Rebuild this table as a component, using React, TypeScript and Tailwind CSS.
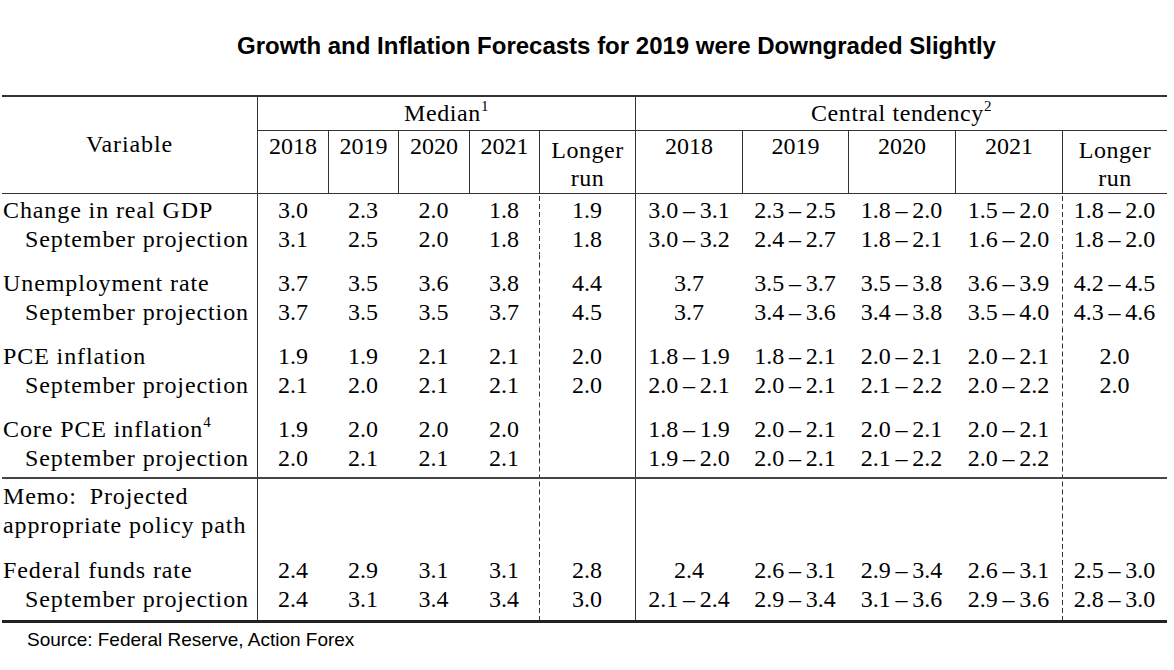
import React from "react";

const GRID =
  "grid grid-cols-[255px_71px_70px_71px_70px_96px_107px_106px_107px_107px_105px]";
const SOLID = "border-l border-[#333]";
const DASHED =
  "bg-[linear-gradient(to_bottom,#333_5px,transparent_5px)] bg-[length:1px_8px] bg-repeat-y bg-left";

type Row = { label: React.ReactNode; indent?: boolean; med: string[]; ct: string[] };

const fmt = (v: string) => (v.includes("-") ? v.replace("-", "\u2009\u2013\u2009") : v);

function Group({ rows, pad, className = "" }: { rows: Row[]; pad: string; className?: string }) {
  const cellLine = "h-[29px] leading-[29px] whitespace-nowrap";
  const border = (c: number) => (c === 0 ? SOLID : c === 4 ? DASHED : "");
  return (
    <div className={`${GRID} ${className}`}>
      <div className={`tracking-[0.9px] ${pad}`}>
        {rows.map((r, i) => (
          <div key={i} className={`${cellLine} ${r.indent ? "pl-[23px]" : "pl-[1px]"}`}>
            {r.label}
          </div>
        ))}
      </div>
      {[0, 1, 2, 3, 4].map((c) => (
        <div key={"m" + c} className={`text-center ${pad} ${border(c)}`}>
          {rows.map((r, i) => (
            <div key={i} className={cellLine}>
              {fmt(r.med[c])}
            </div>
          ))}
        </div>
      ))}
      {[0, 1, 2, 3, 4].map((c) => (
        <div key={"c" + c} className={`text-center ${pad} ${border(c)}`}>
          {rows.map((r, i) => (
            <div key={i} className={cellLine}>
              {fmt(r.ct[c])}
            </div>
          ))}
        </div>
      ))}
    </div>
  );
}

const SEPT = "September projection";
const EMPTY = ["", "", "", "", ""];

export default function App() {
  return (
    <div className="w-[1174px] h-[670px] bg-white text-black overflow-hidden">
      <div className="pt-[32px] pl-[59px] text-center font-['Liberation_Sans',Arial,sans-serif] font-bold text-[24px] leading-[28px]">
        Growth and Inflation Forecasts for 2019 were Downgraded Slightly
      </div>
      <div className="mt-[35px] ml-[2px] w-[1165px] border-t-2 border-[#333] font-['Liberation_Serif',serif] text-[24px]">
        {/* header */}
        <div className={`${GRID} grid-rows-[34px_62px] border-b border-[#333]`}>
          <div className="row-span-2 pt-[33px] text-center leading-[29px] tracking-[0.9px]">
            Variable
          </div>
          <div className={`col-span-5 ${SOLID} border-b pt-[2px] text-center leading-[29px] tracking-[0.6px]`}>
            Median<sup className="text-[15px] -top-[0.7em]">1</sup>
          </div>
          <div className={`col-span-5 ${SOLID} border-b pt-[2px] text-center leading-[29px] tracking-[0.6px]`}>
            Central tendency<sup className="text-[15px] -top-[0.7em]">2</sup>
          </div>
          {["2018", "2019", "2020", "2021"].map((y) => (
            <div key={"m" + y} className={`${SOLID} pt-[1px] text-center leading-[29px]`}>
              {y}
            </div>
          ))}
          <div className={`${SOLID} pt-[5px] text-center leading-[28px] tracking-[0.5px]`}>
            <div>Longer</div>
            <div>run</div>
          </div>
          {["2018", "2019", "2020", "2021"].map((y) => (
            <div key={"c" + y} className={`${SOLID} pt-[1px] text-center leading-[29px]`}>
              {y}
            </div>
          ))}
          <div className={`${SOLID} pt-[5px] text-center leading-[28px] tracking-[0.5px]`}>
            <div>Longer</div>
            <div>run</div>
          </div>
        </div>

        <Group
          pad="pt-[2px]"
          rows={[
            {
              label: "Change in real GDP",
              med: ["3.0", "2.3", "2.0", "1.8", "1.9"],
              ct: ["3.0-3.1", "2.3-2.5", "1.8-2.0", "1.5-2.0", "1.8-2.0"],
            },
            {
              label: SEPT,
              indent: true,
              med: ["3.1", "2.5", "2.0", "1.8", "1.8"],
              ct: ["3.0-3.2", "2.4-2.7", "1.8-2.1", "1.6-2.0", "1.8-2.0"],
            },
          ]}
        />
        <Group
          pad="pt-[15px]"
          rows={[
            {
              label: "Unemployment rate",
              med: ["3.7", "3.5", "3.6", "3.8", "4.4"],
              ct: ["3.7", "3.5-3.7", "3.5-3.8", "3.6-3.9", "4.2-4.5"],
            },
            {
              label: SEPT,
              indent: true,
              med: ["3.7", "3.5", "3.5", "3.7", "4.5"],
              ct: ["3.7", "3.4-3.6", "3.4-3.8", "3.5-4.0", "4.3-4.6"],
            },
          ]}
        />
        <Group
          pad="pt-[15px]"
          rows={[
            {
              label: "PCE inflation",
              med: ["1.9", "1.9", "2.1", "2.1", "2.0"],
              ct: ["1.8-1.9", "1.8-2.1", "2.0-2.1", "2.0-2.1", "2.0"],
            },
            {
              label: SEPT,
              indent: true,
              med: ["2.1", "2.0", "2.1", "2.1", "2.0"],
              ct: ["2.0-2.1", "2.0-2.1", "2.1-2.2", "2.0-2.2", "2.0"],
            },
          ]}
        />
        <Group
          pad="pt-[15px] pb-[4px]"
          className="border-b-2 border-[#444]"
          rows={[
            {
              label: (
                <>
                  Core PCE inflation<sup className="text-[15px] -top-[0.7em]">4</sup>
                </>
              ),
              med: ["1.9", "2.0", "2.0", "2.0", ""],
              ct: ["1.8-1.9", "2.0-2.1", "2.0-2.1", "2.0-2.1", ""],
            },
            {
              label: SEPT,
              indent: true,
              med: ["2.0", "2.1", "2.1", "2.1", ""],
              ct: ["1.9-2.0", "2.0-2.1", "2.1-2.2", "2.0-2.2", ""],
            },
          ]}
        />
        <Group
          pad="pt-[3px]"
          rows={[
            { label: "Memo:\u2002Projected", med: EMPTY, ct: EMPTY },
            { label: "appropriate policy path", med: EMPTY, ct: EMPTY },
          ]}
        />
        <Group
          pad="pt-[16px] pb-[6px]"
          className="border-b-[3px] border-[#222]"
          rows={[
            {
              label: "Federal funds rate",
              med: ["2.4", "2.9", "3.1", "3.1", "2.8"],
              ct: ["2.4", "2.6-3.1", "2.9-3.4", "2.6-3.1", "2.5-3.0"],
            },
            {
              label: SEPT,
              indent: true,
              med: ["2.4", "3.1", "3.4", "3.4", "3.0"],
              ct: ["2.1-2.4", "2.9-3.4", "3.1-3.6", "2.9-3.6", "2.8-3.0"],
            },
          ]}
        />
      </div>
      <div className="mt-[6px] pl-[27px] font-['Liberation_Sans',Arial,sans-serif] text-[19px] leading-[22px]">
        Source: Federal Reserve, Action Forex
      </div>
    </div>
  );
}
